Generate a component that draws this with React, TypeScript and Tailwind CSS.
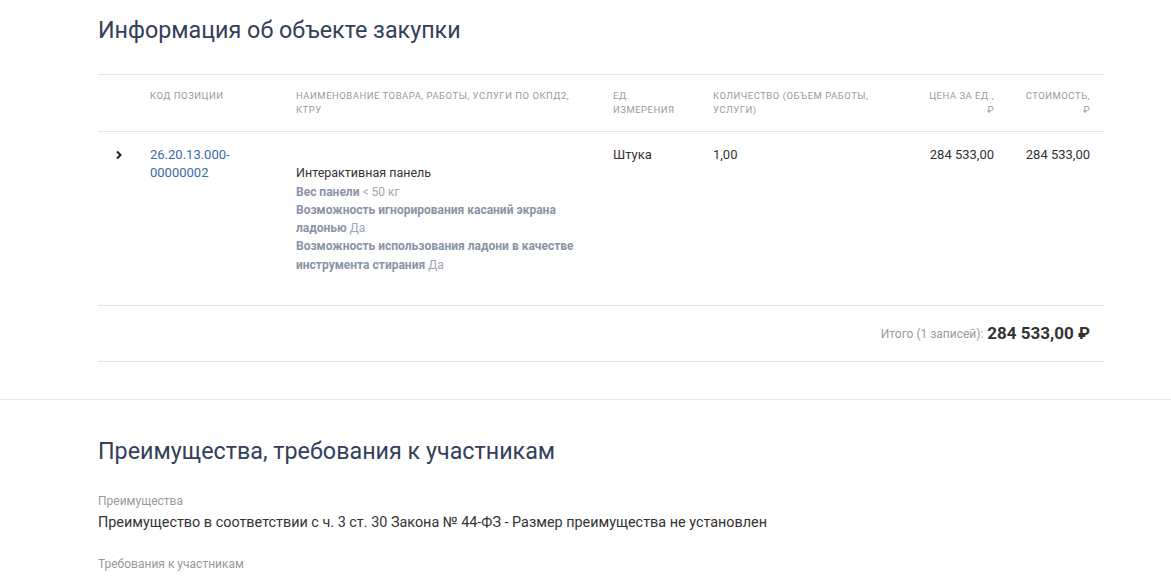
const headers = [
  { label: '', align: 'left' },
  { label: 'Код позиции', align: 'left' },
  { label: 'Наименование товара, работы, услуги по ОКПД2, КТРУ', align: 'left' },
  { label: 'Ед. измерения', align: 'left' },
  { label: 'Количество (объем работы, услуги)', align: 'left' },
  { label: 'Цена за ед., ₽', align: 'right' },
  { label: 'Стоимость, ₽', align: 'right' },
];

const features = [
  { name: 'Вес панели', value: '< 50 кг' },
  { name: 'Возможность игнорирования касаний экрана ладонью', value: 'Да' },
  { name: 'Возможность использования ладони в качестве инструмента стирания', value: 'Да' },
];

const cols = 'grid grid-cols-[38px_146px_317px_100px_215px_94px_96px]';

export default function App() {
  return (
    <div className="min-h-screen bg-white font-['Roboto','Liberation_Sans',sans-serif] text-[#333]">
      <section className="ml-[98px] w-[1006px] pt-[16px] pb-[37px]">
        <h2 className="text-[23.3px] leading-[28px] text-[#334059]">Информация об объекте закупки</h2>

        <div className="mt-[30px] border-t border-[#e6e6e6]">
          <div className={`${cols} border-b border-[#e6e6e6]`}>
            {headers.map((h, i) => (
              <div
                key={i}
                className={`pt-[14px] pb-[14px] text-[9.5px] leading-[14px] uppercase tracking-[0.5px] text-[#9a9a9a] ${
                  h.align === 'right' ? 'text-right' : ''
                } ${i === 0 ? 'px-0' : 'px-[14px]'}`}
              >
                {h.label}
              </div>
            ))}
          </div>

          <div className={`${cols} border-b border-[#e6e6e6] pt-[14px] pb-[31px] text-[13px] leading-[18.3px]`}>
            <div>
              <svg width="10" height="12" viewBox="0 0 10 12" className="ml-[16px] mt-[3px]">
                <path d="M3 2.5l3.5 3.5L3 9.5" stroke="#222" strokeWidth="2" fill="none" />
              </svg>
            </div>
            <div className="px-[14px] text-[#3b6aa8]">
              26.20.13.000-
              <br />
              00000002
            </div>
            <div className="px-[14px] pt-[18.3px]">
              <div className="text-[12.5px]">Интерактивная панель</div>
              {features.map((f) => (
                <div key={f.name} className="text-[12px] text-[#a0a6b2]">
                  <span className="font-bold text-[#8a93a6]">{f.name}</span> {f.value}
                </div>
              ))}
            </div>
            <div className="px-[14px]">Штука</div>
            <div className="px-[14px]">1,00</div>
            <div className="px-[14px] text-right">284 533,00</div>
            <div className="px-[14px] text-right">284 533,00</div>
          </div>

          <div className="flex h-[56px] items-center justify-end border-b border-[#e6e6e6] pr-[14px]">
            <span className="text-[12px] text-[#9a9a9a]">Итого (1 записей):</span>
            <span className="ml-[4px] text-[17px] font-bold text-[#333]">284 533,00 ₽</span>
          </div>
        </div>
      </section>

      <div className="border-t border-[#e6e6e6]" />

      <section className="ml-[98px] w-[1006px] pt-[37px]">
        <h2 className="text-[23.3px] leading-[28px] text-[#334059]">Преимущества, требования к участникам</h2>
        <div className="mt-[28px] text-[12px] leading-[16px] text-[#9a9a9a]">Преимущества</div>
        <div className="mt-[4px] text-[14.4px] leading-[20px] text-[#333]">
          Преимущество в соответствии с ч. 3 ст. 30 Закона № 44-ФЗ - Размер преимущества не установлен
        </div>
        <div className="mt-[23px] text-[12px] leading-[16px] text-[#9a9a9a]">Требования к участникам</div>
      </section>
    </div>
  );
}
